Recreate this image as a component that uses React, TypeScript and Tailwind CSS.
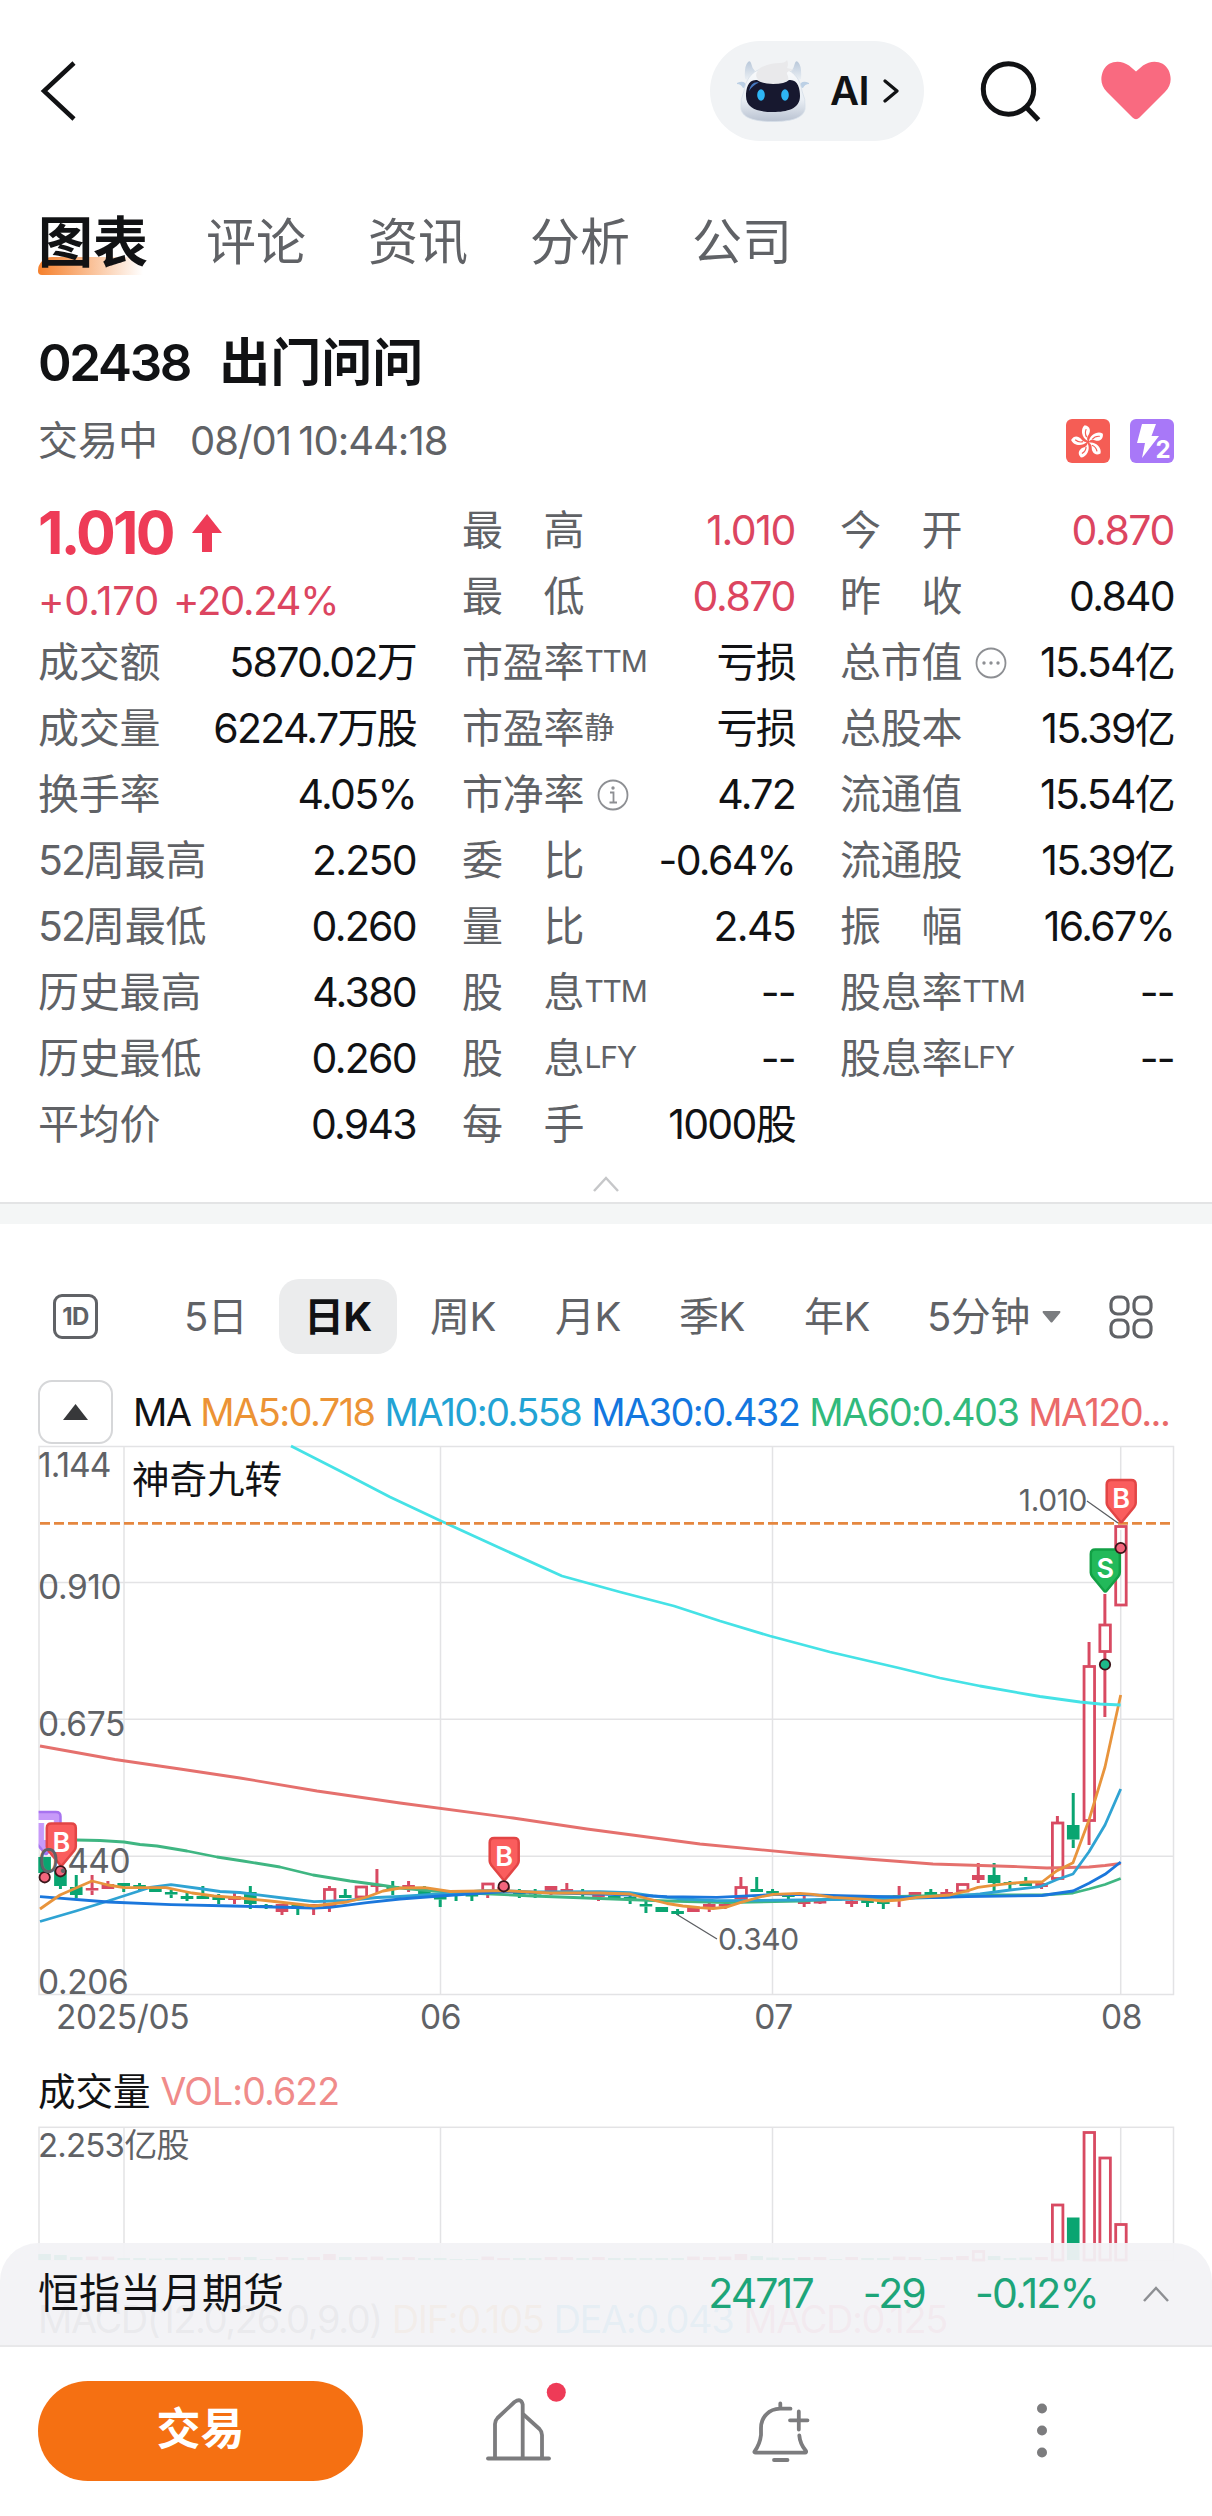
import React from 'react';

type Tone = 'up' | 'normal';

interface Quote {
  prefix?: string;
  label: string;
  suffix?: string;
  icon?: 'info' | 'more';
  value: string;
  tone?: Tone;
}

const column1: Quote[] = [
  { label: '成交额', value: '5870.02万' },
  { label: '成交量', value: '6224.7万股' },
  { label: '换手率', value: '4.05%' },
  { prefix: '52', label: '周最高', value: '2.250' },
  { prefix: '52', label: '周最低', value: '0.260' },
  { label: '历史最高', value: '4.380' },
  { label: '历史最低', value: '0.260' },
  { label: '平均价', value: '0.943' }
];

const column2: Quote[] = [
  { label: '最　高', value: '1.010', tone: 'up' },
  { label: '最　低', value: '0.870', tone: 'up' },
  { label: '市盈率', suffix: 'TTM', value: '亏损' },
  { label: '市盈率', suffix: '静', value: '亏损' },
  { label: '市净率', icon: 'info', value: '4.72' },
  { label: '委　比', value: '-0.64%' },
  { label: '量　比', value: '2.45' },
  { label: '股　息', suffix: 'TTM', value: '--' },
  { label: '股　息', suffix: 'LFY', value: '--' },
  { label: '每　手', value: '1000股' }
];

const column3: Quote[] = [
  { label: '今　开', value: '0.870', tone: 'up' },
  { label: '昨　收', value: '0.840' },
  { label: '总市值', icon: 'more', value: '15.54亿' },
  { label: '总股本', value: '15.39亿' },
  { label: '流通值', value: '15.54亿' },
  { label: '流通股', value: '15.39亿' },
  { label: '振　幅', value: '16.67%' },
  { label: '股息率', suffix: 'TTM', value: '--' },
  { label: '股息率', suffix: 'LFY', value: '--' }
];

const RED = '#d84a62';
const GREEN = '#0aa571';

// kind, wick top, body top, body bottom, wick bottom
// kind: r = filled red, h = hollow red, g = green
type Candle = [string, number, number, number, number];

const FIRST_X = 44.6;
const STEP = 15.825;

const candles: Candle[] = [
  ['g', 1857, 1857, 1873, 1873],
  ['g', 1868, 1870, 1886, 1889],
  ['g', 1875, 1887, 1895, 1898],
  ['r', 1875, 1888, 1890.5, 1895],
  ['r', 1881, 1884, 1889, 1889],
  ['g', 1883, 1883, 1886, 1892],
  ['g', 1883, 1885, 1887.5, 1890],
  ['g', 1889, 1889, 1892, 1892],
  ['g', 1890, 1892, 1894.5, 1898],
  ['g', 1893, 1896, 1899, 1901],
  ['g', 1886, 1896, 1899, 1899],
  ['g', 1894, 1896, 1900, 1904],
  ['r', 1893, 1896, 1900, 1904],
  ['g', 1886, 1892, 1904, 1909],
  ['g', 1904, 1905, 1908, 1909],
  ['r', 1904, 1904, 1912, 1915],
  ['g', 1904, 1905, 1909, 1915],
  ['r', 1905, 1904, 1907, 1915],
  ['h', 1886, 1889.5, 1906, 1912],
  ['g', 1889, 1895, 1898, 1898],
  ['h', 1887, 1887, 1897, 1897],
  ['r', 1869, 1884, 1887, 1893],
  ['g', 1881, 1886, 1889, 1895],
  ['r', 1881, 1885, 1888, 1892],
  ['g', 1886, 1890, 1894, 1895],
  ['g', 1895, 1897, 1899.5, 1907],
  ['g', 1893, 1893, 1895, 1901],
  ['g', 1893, 1894, 1896, 1901],
  ['h', 1884, 1884, 1891, 1898],
  ['r', 1887, 1887, 1891, 1892],
  ['g', 1889, 1892, 1894, 1898],
  ['g', 1889, 1892, 1894, 1898],
  ['r', 1886, 1886, 1891, 1895],
  ['r', 1883, 1889, 1891, 1892],
  ['g', 1889, 1892, 1894, 1897],
  ['r', 1893, 1894, 1897, 1901],
  ['g', 1896, 1896, 1899, 1899],
  ['g', 1896, 1897, 1899, 1904],
  ['g', 1900, 1904, 1906.5, 1913],
  ['g', 1907, 1907, 1912, 1912],
  ['g', 1909, 1911, 1914, 1915],
  ['r', 1907, 1907, 1912, 1912],
  ['r', 1903, 1904, 1907, 1912],
  ['r', 1903, 1904, 1906, 1909],
  ['h', 1877, 1887.5, 1898, 1900],
  ['g', 1877, 1889, 1892, 1892],
  ['g', 1889, 1891, 1893.5, 1894],
  ['g', 1893, 1894, 1897, 1900],
  ['r', 1895, 1901, 1904, 1907],
  ['r', 1900, 1901, 1903, 1904],
  ['g', 1898, 1898, 1900, 1900],
  ['r', 1900, 1901, 1904, 1907],
  ['g', 1900, 1900, 1903, 1907],
  ['g', 1900, 1901, 1904, 1909],
  ['r', 1886, 1895, 1897, 1907],
  ['r', 1892, 1892, 1895, 1896],
  ['g', 1889, 1892, 1896, 1896],
  ['r', 1889, 1892, 1895, 1895],
  ['h', 1884.5, 1884.5, 1891, 1893],
  ['r', 1863, 1875, 1880, 1883],
  ['g', 1863, 1875, 1883, 1892],
  ['g', 1881, 1882, 1884, 1890],
  ['g', 1877, 1883, 1886, 1886],
  ['r', 1882, 1883, 1887, 1889],
  ['h', 1816, 1823, 1878.5, 1880],
  ['g', 1793, 1825, 1839.5, 1848],
  ['h', 1642, 1666.5, 1820.5, 1845],
  ['h', 1594, 1625, 1651.5, 1717],
  ['h', 1526.5, 1526.5, 1605, 1605]
];

const averages = [
  {
    color: '#e5706d',
    points: '40,1746 115,1759.5 180,1769 240,1778 317,1791 400,1803 513,1818 587,1829 700,1844 800,1853.5 867,1859 933,1864 1013,1866.5 1047,1868 1089,1867 1105,1865.5 1120.7,1863.5'
  },
  {
    color: '#3fb682',
    points: '76,1840 100,1840.5 124,1842 140,1844.5 157,1846 187,1851 217,1857 243,1861 280,1867 313,1875 350,1881 380,1885 400,1888 433,1891 480,1893.5 533,1896 600,1898.5 667,1901 727,1902.5 800,1901 850,1898 900,1896.5 967,1895 1042,1895 1073,1893 1089,1889 1105,1884.5 1120.7,1878.5'
  },
  {
    color: '#2fa3d3',
    points: '40,1921.5 76,1911 108,1901 150,1887.5 171,1884.7 203,1889 220,1891.5 240,1892.5 287,1898.5 314,1901.7 347,1900.5 377,1897.5 400,1896.5 440,1894 480,1891 504,1890.7 533,1892 600,1891.7 630,1892.7 653,1896 683,1899 717,1900.7 800,1900 833,1899.5 900,1898.5 947,1897 980,1894 1010,1890 1040,1886.7 1057,1879.5 1073,1874 1089,1851.7 1105,1825 1120.7,1789'
  },
  {
    color: '#1b77dc',
    points: '40,1896.7 108,1902 171,1904.7 233,1906 314,1908 330,1907.3 367,1902.7 400,1899 440,1896 480,1893.3 504,1891.7 567,1893.3 600,1894 630,1895 667,1896.7 717,1897.3 753,1895.7 773,1894.7 800,1894.7 850,1896 933,1897.7 967,1896.7 1042,1895.5 1073,1891 1089,1883.3 1105,1874.3 1120.7,1862'
  },
  {
    color: '#e8943c',
    points: '40,1909 60,1895 76,1888 92,1881 108,1885 124,1887.7 166,1887.7 192,1893 214,1896 240,1898 270,1901 314,1906 347,1902 367,1897 383,1891 400,1888 425,1887.7 450,1891.5 480,1891 504,1890.7 550,1893 600,1893 630,1894 647,1898.5 667,1903.5 683,1906 700,1907.7 713,1908.5 727,1907 740,1902.7 760,1897 773,1894.3 800,1893.3 813,1894.3 833,1897.3 867,1899.3 883,1901 900,1900 917,1897.3 950,1895 967,1891 978,1887.3 993,1885.3 1010,1883.3 1027,1882 1042,1882 1057,1870.7 1073,1862.7 1089,1820 1105,1767 1120.7,1695'
  },
  {
    color: '#45e2e6',
    points: '291,1446 340,1471 390,1497 441,1521 500,1548 562,1576 620,1592 674,1606 720,1621 770,1636 830,1652 899,1668 940,1678 980,1686 1040,1696.5 1080,1702 1100,1704 1120.7,1705'
  }
];

const volumes: [string, number][] = [
  ['g', 2254], ['g', 2255], ['g', 2257], ['r', 2256.5], ['r', 2256.5], ['g', 2258], ['g', 2258], ['g', 2258.5],
  ['g', 2258], ['g', 2258], ['g', 2258], ['g', 2258], ['r', 2257], ['g', 2257], ['g', 2259], ['r', 2257],
  ['g', 2258], ['r', 2257], ['r', 2254], ['g', 2257], ['r', 2257], ['r', 2256.5], ['g', 2258], ['r', 2257],
  ['g', 2258], ['g', 2258], ['g', 2259], ['g', 2259], ['r', 2256.5], ['r', 2258], ['g', 2258], ['g', 2258],
  ['r', 2257], ['r', 2257], ['g', 2258], ['r', 2257], ['g', 2258], ['g', 2258], ['g', 2258], ['g', 2258],
  ['g', 2258], ['r', 2256.5], ['r', 2257], ['r', 2256.5], ['r', 2254], ['g', 2256], ['g', 2257.5], ['g', 2258],
  ['r', 2257], ['r', 2257], ['g', 2259], ['r', 2257], ['g', 2258], ['g', 2258], ['r', 2256.5], ['r', 2257],
  ['g', 2259], ['r', 2257], ['r', 2256], ['h', 2251.5], ['g', 2256], ['g', 2258], ['g', 2257.5], ['r', 2257],
  ['h', 2205], ['g', 2217.5], ['h', 2132.5], ['h', 2158], ['h', 2224.5]
];

function Pin({ x, y, letter, fill, stroke }: { x: number; y: number; letter: string; fill: string; stroke: string }) {
  return (
    <g transform={`translate(${x} ${y})`}>
      <path
        d="M-10 1 H10 Q14.500 1 14.500 5.500 V24 Q14.500 26 13 28 L1.500 42 Q0 44 -1.500 42 L-13 28 Q-14.500 26 -14.500 24 V5.500 Q-14.500 1 -10 1 Z"
        fill={fill}
        stroke={stroke}
        strokeWidth="2.500"
      />
      <text x="0" y="29" textAnchor="middle" className="fill-white text-[27px] font-semibold">{letter}</text>
    </g>
  );
}

function Dot({ x, y, fill }: { x: number; y: number; fill: string }) {
  return <circle cx={x} cy={y} r="5.200" fill={fill} stroke="#3a1519" strokeWidth="1.800" />;
}

function PriceChart() {
  return (
    <svg className="block h-[600px] w-[1212px]" viewBox="0 1444 1212 600">
      <g stroke="#e3e3e5" strokeWidth="1.500" fill="none">
        <rect x="39" y="1446.500" width="1134.500" height="548" />
        <path d="M39 1582.500H1173 M39 1719.300H1173 M39 1856.300H1173" />
        <path d="M124 1446V1994 M440.500 1446V1994 M772.500 1446V1994 M1120.700 1446V1994" />
      </g>
      <Pin x={46} y={1811} letter="T" fill="#c79af9" stroke="#a874f0" />
      <rect x="24" y="1800" width="14.500" height="80" fill="#fff" />
      {candles.map(([kind, high, top, bottom, low], i) => {
        const x = FIRST_X + i * STEP;
        const color = kind === 'g' ? GREEN : RED;
        return (
          <g key={i} stroke={color}>
            {high < top && <path d={`M${x} ${high}V${top}`} strokeWidth="3" />}
            {low > bottom && <path d={`M${x} ${bottom}V${low}`} strokeWidth="3" />}
            {kind === 'h' ? (
              <rect x={x - 5} y={top} width="10.500" height={bottom - top} fill="#fff" strokeWidth="2.800" />
            ) : (
              <rect x={x - 6.3} y={top} width="12.600" height={Math.max(bottom - top, 2.5)} fill={color} stroke="none" />
            )}
          </g>
        );
      })}
      {averages.map((line) => (
        <polyline key={line.color} points={line.points} fill="none" stroke={line.color} strokeWidth="2.800" strokeLinejoin="round" />
      ))}
      <path d="M1120.700 1530V1602" stroke="#e3e3e5" strokeWidth="1.500" />
      <path d="M40 1523.300H1171" stroke="#e5873f" strokeWidth="2.800" strokeDasharray="10 4" />
      <path d="M1087 1501L1118 1523 M677 1914.500L717 1939" stroke="#5c5e62" strokeWidth="1.300" />
      <Pin x={61.3} y={1822.5} letter="B" fill="#fa5d5d" stroke="#e24545" />
      <Pin x={504.2} y={1837} letter="B" fill="#fa5d5d" stroke="#e24545" />
      <Pin x={1121.2} y={1479} letter="B" fill="#fa5d5d" stroke="#e24545" />
      <Pin x={1105.3} y={1548.5} letter="S" fill="#22b95a" stroke="#12a045" />
      <Dot x={44.7} y={1877.3} fill="#f3667d" />
      <Dot x={60.5} y={1871.3} fill="#f3667d" />
      <Dot x={503.7} y={1886.3} fill="#f3667d" />
      <Dot x={1105} y={1664.5} fill="#1db989" />
      <Dot x={1120.7} y={1548} fill="#f3667d" />
      <g className="fill-[#606266] text-[33.5px] tracking-[-0.4px]">
        <text x="38" y="1476.500" className="tracking-[-1px]">1.144</text>
        <text x="38" y="1598.500">0.910</text>
        <text x="38" y="1735.500">0.675</text>
        <text x="38" y="1872.500">0.440</text>
        <text x="38" y="1994">0.206</text>
        <text x="56" y="2029">2025/05</text>
        <text x="440.500" y="2029" textAnchor="middle">06</text>
        <text x="773.500" y="2029" textAnchor="middle">07</text>
        <text x="1121.500" y="2029" textAnchor="middle">08</text>
      </g>
      <g className="fill-[#606266] text-[30px] tracking-[-0.4px]">
        <text x="1087" y="1511" textAnchor="end">1.010</text>
        <text x="718" y="1950">0.340</text>
      </g>
      <text x="132" y="1493" className="fill-[#111214] text-[37.5px]">神奇九转</text>
    </svg>
  );
}

function VolumeChart() {
  return (
    <svg className="block h-[136px] w-[1212px]" viewBox="0 2126 1212 136">
      <g stroke="#e3e3e5" strokeWidth="1.500" fill="none">
        <rect x="39" y="2127.300" width="1134.500" height="133" />
        <path d="M124 2127V2260 M440.500 2127V2260 M772.500 2127V2260 M1120.700 2127V2260" />
      </g>
      {volumes.map(([kind, top], i) => {
        const x = FIRST_X + i * STEP;
        const color = kind === 'g' ? GREEN : RED;
        return kind === 'h' ? (
          <rect key={i} x={x - 5} y={top} width="10.500" height={2260 - top} fill="#fff" stroke={color} strokeWidth="2.800" />
        ) : (
          <rect key={i} x={x - 6.3} y={top} width="12.600" height={2260 - top} fill={color} />
        );
      })}
      <text x="38" y="2157" className="fill-[#606266] text-[33px] tracking-[-0.8px]">2.253亿股</text>
    </svg>
  );
}

function LabelIcon({ kind }: { kind: 'info' | 'more' }) {
  return (
    <svg className="ml-[13px] h-8 w-8" viewBox="0 0 32 32" fill="none" stroke="#8d8f93" strokeWidth="1.800">
      <circle cx="16" cy="16" r="14.500" />
      {kind === 'info' ? (
        <>
          <path d="M13 13.500H16.500V23 M12.500 23.500H20" />
          <circle cx="16" cy="9" r="1.700" fill="#8d8f93" stroke="none" />
        </>
      ) : (
        <g fill="#8d8f93" stroke="none">
          <circle cx="9" cy="16" r="1.700" />
          <circle cx="16" cy="16" r="1.700" />
          <circle cx="23" cy="16" r="1.700" />
        </g>
      )}
    </svg>
  );
}

function QuoteRow({ quote }: { quote: Quote }) {
  return (
    <div className="flex h-[66px] items-center justify-between whitespace-nowrap text-[41px]">
      <div className="flex items-center text-[#606266]">
        {quote.prefix && <span className="tracking-[-2px]">{quote.prefix}</span>}
        <span className="tracking-[-0.2px]">{quote.label}</span>
        {quote.suffix && <span className="-mt-1 text-[30px] tracking-[-1.2px]">{quote.suffix}</span>}
        {quote.icon && <LabelIcon kind={quote.icon} />}
      </div>
      <span className={quote.tone === 'up' ? 'tracking-[-1.4px] text-[#dc4560]' : 'tracking-[-1.7px] text-[#111214]'}>
        {quote.value}
      </span>
    </div>
  );
}

function Robot() {
  return (
    <svg className="h-[64px] w-[72px]" viewBox="0 0 72 64">
      <defs>
        <linearGradient id="shell" x1="0" y1="0" x2="0" y2="1">
          <stop offset="0" stopColor="#fafbfc" />
          <stop offset="0.600" stopColor="#e9eef4" />
          <stop offset="1" stopColor="#b9c2d1" />
        </linearGradient>
        <linearGradient id="horn" x1="0" y1="0" x2="0" y2="1">
          <stop offset="0" stopColor="#b9c8da" />
          <stop offset="1" stopColor="#eef2f6" />
        </linearGradient>
      </defs>
      <path d="M0 24Q8 20 10 28L6 29Q4 25 0 25Z M72 24Q64 20 62 28L66 29Q68 25 72 25Z" fill="#bcd0e5" />
      <path d="M8 20Q7 7 11 3Q13 1 14 4Q15 9 18 12L12 22Z M64 20Q65 7 61 3Q59 1 58 4Q57 9 54 12L60 22Z" fill="url(#horn)" />
      <path d="M36 8C54 8 63 18 65 32Q69 40 68 50C66 60 52 62.500 36 62.500C20 62.500 6 60 4 50Q3 40 7 32C9 18 18 8 36 8Z" fill="url(#shell)" stroke="#d5dee9" strokeWidth="0.800" />
      <path d="M23 9Q32 4 43 4Q48 4 50 1Q52 5 50 9Q55 10 57 11Q49 12 50 15Q54 22 46 25Q36 27 26 24Q14 18 23 9Z" fill="#e9e9eb" />
      <path d="M20 21Q25 25 36 25Q48 25 52 21C61 20 63 30 63 37C63 50 50 53 36 53C22 53 9 50 9 37C9 30 11 20 20 21Z" fill="#17182f" />
      <path d="M12 32Q14 22 22 23.500Q16 26 12 32Z" fill="#4779c0" />
      <ellipse cx="24" cy="36" rx="3.800" ry="5.800" fill="#2eb6f5" />
      <ellipse cx="48" cy="36" rx="3.800" ry="5.800" fill="#2eb6f5" />
    </svg>
  );
}

function Header() {
  return (
    <header className="mt-[41px] flex h-[100px] items-center pl-10 pr-[41px]">
      <svg className="h-[60px] w-9" viewBox="0 0 36 60" fill="none" stroke="#111214" strokeWidth="4.500">
        <path d="M34 2L4 30L34 58" />
      </svg>
      <div className="ml-auto flex h-[100px] w-[214px] items-center rounded-full bg-[#f1f3f5] pl-[27px]">
        <Robot />
        <span className="ml-[21px] text-[40px] font-semibold tracking-[-0.5px] text-[#111214]">AI</span>
        <svg className="ml-[14px] h-6 w-4" viewBox="0 0 16 24" fill="none" stroke="#111214" strokeWidth="3.200" strokeLinecap="round" strokeLinejoin="round">
          <path d="M2 2L14 12L2 22" />
        </svg>
      </div>
      <svg className="ml-14 h-16 w-16" viewBox="0 0 64 64" fill="none" stroke="#111214" strokeWidth="5">
        <circle cx="28.500" cy="30" r="25.200" />
        <path d="M46 48L58.500 61" />
      </svg>
      <svg className="ml-[57px] h-[60px] w-[70px]" viewBox="0 0 70 60">
        <path d="M35 10.500L28 4.500C19-2 7 0 2.500 9C-1 17-.5 24 6 31L31.500 56.500Q35 60 38.500 56.500L64 31C70.500 24 71 17 67.500 9C63 0 51-2 42 4.500Z" fill="#f96a80" />
      </svg>
    </header>
  );
}

function MarketBadges() {
  return (
    <div className="ml-auto flex gap-5">
      <svg className="h-11 w-11" viewBox="0 0 44 44">
        <rect width="44" height="44" rx="6" fill="#f55d55" />
        {[0, 72, 144, 216, 288].map((angle) => (
          <g key={angle} transform={`rotate(${angle - 8} 22 23)`}>
            <path d="M22 22C16 18 16 9 21 6C27 8 26 13 24 15.500C21.500 18 21 20 22 22Z" fill="#fff" />
            <path d="M21.500 18Q19.500 14 22 10" fill="none" stroke="#f55d55" strokeWidth="1.200" />
          </g>
        ))}
      </svg>
      <svg className="h-11 w-11" viewBox="0 0 44 44">
        <rect width="44" height="44" rx="6" fill="#a878f8" />
        <path d="M12 5H26L21.500 17H29L12 39L15 24H7Z" fill="#fff" />
        <text x="25.500" y="39" className="fill-white text-[24px] font-bold">2</text>
      </svg>
    </div>
  );
}

function PeriodBar() {
  return (
    <div className="mt-[55px] flex h-[75px] items-center text-[40px] text-[#606266] tracking-[-0.5px]">
      <div className="ml-[53px] flex h-[45px] w-[45px] items-center justify-center rounded-[9px] border-[3px] border-[#606266] text-[24px] font-bold">1D</div>
      <span className="ml-[86px] w-[95px]">5日</span>
      <span className="flex h-[75px] w-[118px] items-center justify-center rounded-[20px] bg-[#ebeced] font-bold text-[#111214]">日K</span>
      <span className="ml-[33px] w-[125px]">周K</span>
      <span className="w-[124px]">月K</span>
      <span className="w-[125px]">季K</span>
      <span className="w-[123px]">年K</span>
      <span>5分钟</span>
      <svg className="ml-3 h-3 w-[19px]" viewBox="0 0 19 12">
        <path d="M1 0H18Q19 1 18 2L10.500 11Q9.500 12 8.500 11L1 2Q0 1 1 0Z" fill="#7b7d80" />
      </svg>
      <svg className="ml-auto mr-[59px] h-[44px] w-[44px]" viewBox="0 0 44 44" fill="none" stroke="#606266" strokeWidth="3.200">
        <rect x="2" y="2" width="17" height="17" rx="6.500" />
        <rect x="25" y="2" width="17" height="17" rx="6.500" />
        <rect x="2" y="25" width="17" height="17" rx="6.500" />
        <rect x="25" y="25" width="17" height="17" rx="6.500" />
      </svg>
    </div>
  );
}

function BottomDock() {
  return (
    <div className="absolute inset-x-0 bottom-0">
      <div className="flex h-[104px] items-center rounded-t-[38px] border-b-2 border-[#e8e8ea] bg-[#f2f2f5]/94 px-[38px] text-[41px]">
        <span className="text-[#111214]">恒指当月期货</span>
        <span className="ml-auto tracking-[-1.9px] text-[#1da579]">24717</span>
        <span className="ml-[50px] tracking-[-1.9px] text-[#1da579]">-29</span>
        <span className="ml-[50px] tracking-[-1.8px] text-[#1da579]">-0.12%</span>
        <svg className="ml-11 mr-1 h-4 w-[28px]" viewBox="0 0 28 16" fill="none" stroke="#8d8f93" strokeWidth="2.500">
          <path d="M2 15L14 2L26 15" />
        </svg>
      </div>
      <div className="flex h-[169px] items-start bg-white pl-[38px] pt-[28px]">
        <button className="mt-[6px] h-[100px] w-[325px] rounded-full bg-[#f57012] pb-1 text-[44px] font-bold text-white">交易</button>
        <svg className="ml-[117px] h-[92px] w-[92px]" viewBox="480 2375 92 92" fill="none" stroke="#7c7c7e" strokeWidth="3.800" strokeLinecap="round" strokeLinejoin="round">
          <path d="M488 2458.500H549" />
          <path d="M495 2458V2424Q495 2420.500 497.500 2418L514.500 2402Q521 2397.500 522.700 2404.500V2458" />
          <path d="M523.500 2414.500L539.500 2429Q542 2431.500 542 2435V2458" />
          <circle cx="556.300" cy="2392.300" r="9.500" fill="#ee3b57" stroke="none" />
        </svg>
        <svg className="ml-[168px] h-[92px] w-[76px]" viewBox="740 2375 76 92" fill="none" stroke="#7c7c7e" strokeWidth="3.800" strokeLinecap="round" strokeLinejoin="round">
          <path d="M780.300 2403.500V2408.500 M790.500 2408.700H780C769 2409 761 2417 761 2428V2435Q760 2444 754.500 2451.500Q754 2452.600 755.500 2452.600H805Q806.500 2452.500 806 2451Q800 2444 799.300 2435.500" />
          <path d="M774 2460H787.500 M790 2420.300H807.500 M798.800 2411.500V2429.500" />
        </svg>
        <svg className="ml-[220px] h-[92px] w-3" viewBox="1036 2375 12 92" fill="#7c7c7e">
          <circle cx="1042" cy="2408.500" r="5" />
          <circle cx="1042" cy="2430.500" r="5" />
          <circle cx="1042" cy="2452.500" r="5" />
        </svg>
      </div>
    </div>
  );
}

export default function App() {
  return (
    <div className="relative h-[2516px] w-[1212px] overflow-hidden bg-white [font-family:Inter,'Noto_Sans_CJK_SC',sans-serif]">
      <Header />

      <nav className="mt-[61px] flex h-[80px] items-center pl-[38px] text-[50px] text-[#606266]">
        <div className="relative mr-[58px] text-[55px] font-bold text-[#111214]">
          <div className="absolute bottom-[8px] left-0 h-[18px] w-[105px] rounded-tl-[14px] rounded-bl-[4px] bg-linear-to-r from-[#f5802c] to-transparent" />
          <span className="relative">图表</span>
        </div>
        <span className="mr-[62px]">评论</span>
        <span className="mr-[62px]">资讯</span>
        <span className="mr-[62px]">分析</span>
        <span>公司</span>
      </nav>

      <h1 className="mt-[51px] flex h-[60px] items-center pl-[38px] text-[51px] text-[#111214]">
        <span className="font-semibold tracking-[-2.3px]">02438</span>
        <span className="ml-[29px] font-bold">出门问问</span>
      </h1>
      <div className="mt-[23px] flex h-[50px] items-center pl-[38px] pr-[38px] text-[40px] text-[#606266]">
        <span>交易中</span>
        <span className="ml-8 tracking-[-1px] [word-spacing:-3px]">08/01 10:44:18</span>
        <MarketBadges />
      </div>

      <section className="mt-8 flex h-[660px] pl-[38px] pr-[38px]">
        <div className="w-[378px]">
          <div className="flex h-[70px] items-center text-[59px] font-bold tracking-[-2.7px] text-[#ee3b57]">
            1.010
            <svg className="ml-[19px] h-[38px] w-[30px]" viewBox="0 0 30 38" fill="#ee3b57">
              <path d="M15 0L30 19H20V38H10V19H0Z" />
            </svg>
          </div>
          <div className="flex h-[62px] items-center pt-[3px] text-[40px] text-[#dc4560]">
            <span className="tracking-[-0.2px]">+0.170</span>
            <span className="ml-[14px] tracking-[-1.3px]">+20.24%</span>
          </div>
          {column1.map((quote, i) => <QuoteRow key={i} quote={quote} />)}
        </div>
        <div className="ml-[46px] w-[333px]">
          {column2.map((quote, i) => <QuoteRow key={i} quote={quote} />)}
        </div>
        <div className="ml-[45px] w-[334px]">
          {column3.map((quote, i) => <QuoteRow key={i} quote={quote} />)}
        </div>
      </section>

      <svg className="mx-auto mt-[18px] block h-4 w-[28px]" viewBox="0 0 28 16" fill="none" stroke="#c6c7c9" strokeWidth="2.500">
        <path d="M2 15L14 2L26 15" />
      </svg>
      <div className="mt-[10px] h-[22px] border-t-2 border-[#e3e4e5] bg-[#f4f6f6]" />

      <PeriodBar />

      <div className="mt-[26px] flex h-[64px] items-center pl-[38px] text-[38px] tracking-[-1.6px] whitespace-nowrap">
        <div className="flex h-[64px] w-[75px] items-center justify-center rounded-[14px] border-2 border-[#d6d7d9]">
          <svg className="h-4 w-[25px]" viewBox="0 0 25 16">
            <path d="M12.500 0L25 16H0Z" fill="#37383a" />
          </svg>
        </div>
        <span className="ml-5 text-[#111214]">MA</span>
        <span className="ml-[10px] text-[#ec9335]">MA5:0.718</span>
        <span className="ml-[10px] text-[#22a3d4]">MA10:0.558</span>
        <span className="ml-[10px] text-[#1377df]">MA30:0.432</span>
        <span className="ml-[10px] text-[#32ba7c]">MA60:0.403</span>
        <span className="ml-[10px] text-[#ea6a6a]">MA120...</span>
      </div>

      <PriceChart />

      <div className="mt-[18px] mb-1 flex h-[60px] items-center pl-[38px] text-[37.5px]">
        <span className="text-[#111214]">成交量</span>
        <span className="ml-[10px] tracking-[-0.9px] text-[#f08b8a]">VOL:0.622</span>
      </div>
      <VolumeChart />
      <div className="mt-[32px] flex h-[50px] items-center gap-[10px] pl-[38px] text-[38px] tracking-[-1.4px] whitespace-nowrap">
        <span className="text-[#606266]">MACD(12.0,26.0,9.0)</span>
        <span className="text-[#ec9335]">DIF:0.105</span>
        <span className="text-[#22a3d4]">DEA:0.043</span>
        <span className="text-[#ea6a8a]">MACD:0.125</span>
      </div>

      <BottomDock />
    </div>
  );
}
